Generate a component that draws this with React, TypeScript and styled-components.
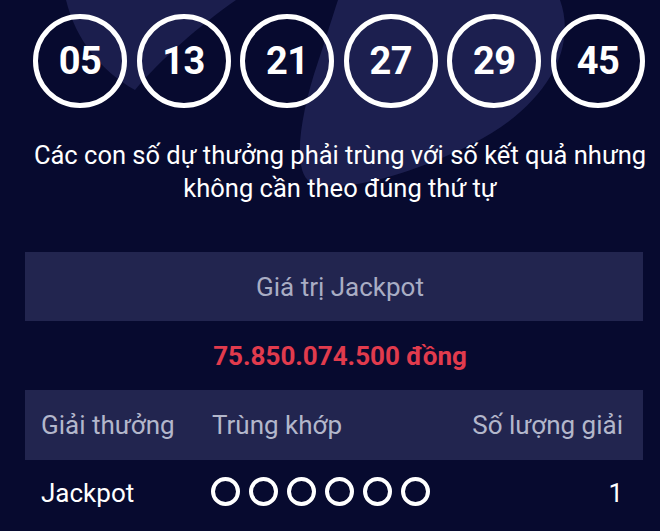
import styled, { createGlobalStyle } from 'styled-components'

const GlobalStyle = createGlobalStyle`
  html, body {
    margin: 0;
    padding: 0;
    background: #070a2f;
  }
  body {
    font-family: Roboto, "Noto Sans", "Liberation Sans", sans-serif;
    -webkit-font-smoothing: antialiased;
  }
`

const drawn = [5, 13, 21, 27, 29, 45]

const Page = styled.div`
  position: relative;
  width: 660px;
  height: 531px;
  overflow: hidden;
  background: #070a2f;
  color: #ffffff;
`

const Backdrop = styled.svg`
  position: absolute;
  top: 0;
  left: 0;
  width: 660px;
  height: 260px;
  pointer-events: none;
`

const Content = styled.main`
  position: relative;
  display: flex;
  flex-direction: column;
  width: 618px;
  padding: 14px 0 0 25px;
`

const BallRow = styled.div`
  display: flex;
  gap: 9.6px;
  padding-left: 8px;
`

const Ball = styled.div`
  display: flex;
  align-items: center;
  justify-content: center;
  width: 94px;
  height: 94px;
  flex-shrink: 0;
  box-sizing: border-box;
  border: 5.5px solid #ffffff;
  border-radius: 50%;
  font-size: 38px;
  font-weight: 700;
  letter-spacing: -0.5px;
  color: #ffffff;
`

const Note = styled.p`
  margin: 31px -10px 0;
  padding-left: 12px;
  font-size: 25.5px;
  line-height: 33px;
  text-align: center;
  color: #ffffff;
  white-space: nowrap;
`

const JackpotBox = styled.div`
  display: flex;
  align-items: center;
  justify-content: center;
  height: 69px;
  margin-top: 47px;
  padding-left: 12px;
  background: #22254f;
  font-size: 26px;
  color: #a9adc4;
`

const Amount = styled.div`
  display: flex;
  align-items: center;
  justify-content: center;
  height: 69px;
  padding-left: 12px;
  font-size: 26px;
  font-weight: 700;
  color: #e13b4d;
`

const TableRow = styled.div<{ $head?: boolean }>`
  display: grid;
  grid-template-columns: 171px 1fr auto;
  align-items: center;
  box-sizing: border-box;
  height: ${(p) => (p.$head ? '70px' : '71px')};
  padding: ${(p) => (p.$head ? '0 20px 0 16px' : '0 20px 5px 16px')};
  background: ${(p) => (p.$head ? '#22254f' : 'transparent')};
  font-size: 26px;
  color: ${(p) => (p.$head ? '#b3b7cb' : '#ffffff')};
`

const Cell = styled.span<{ $right?: boolean }>`
  text-align: ${(p) => (p.$right ? 'right' : 'left')};
  white-space: nowrap;
`

const MatchDots = styled.div`
  display: flex;
  gap: 9px;
  margin: -3px 0 0 -1px;
`

const Dot = styled.span`
  width: 29px;
  height: 29px;
  box-sizing: border-box;
  border: 4.8px solid #ffffff;
  border-radius: 50%;
`

export default function App() {
  return (
    <>
      <GlobalStyle />
      <Page>
        <Backdrop viewBox="0 0 660 260" aria-hidden="true">
          <path
            d="M 66 0 L 236 0 C 200 25 160 60 135 90 C 100 70 76 40 66 0 Z"
            fill="#1b1e4d"
          />
          <path
            d="M 338 0 L 560 0 C 578 50 545 108 470 145 C 420 170 345 196 310 182 C 292 170 300 115 318 62 C 326 38 332 18 338 0 Z"
            fill="#1c1f4f"
          />
        </Backdrop>
        <Content>
          <BallRow>
            {drawn.map((n) => (
              <Ball key={n}>{String(n).padStart(2, '0')}</Ball>
            ))}
          </BallRow>

          <Note>
            Các con số dự thưởng phải trùng với số kết quả nhưng
            <br />
            không cần theo đúng thứ tự
          </Note>

          <JackpotBox>Giá trị Jackpot</JackpotBox>
          <Amount>75.850.074.500 đồng</Amount>

          <TableRow $head>
            <Cell>Giải thưởng</Cell>
            <Cell>Trùng khớp</Cell>
            <Cell $right>Số lượng giải</Cell>
          </TableRow>
          <TableRow>
            <Cell>Jackpot</Cell>
            <MatchDots>
              {drawn.map((n) => (
                <Dot key={n} />
              ))}
            </MatchDots>
            <Cell $right>1</Cell>
          </TableRow>
        </Content>
      </Page>
    </>
  )
}
